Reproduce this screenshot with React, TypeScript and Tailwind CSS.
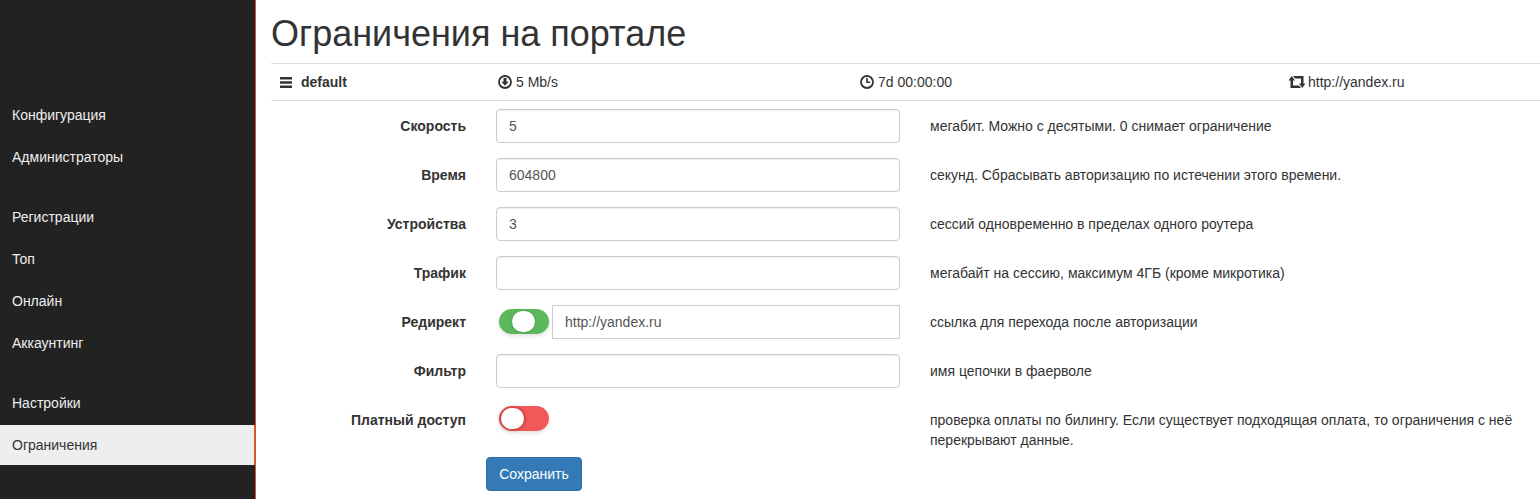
function Toggle({ on }: { on: boolean }) {
  return (
    <div
      className={`relative h-[25px] w-[50px] shrink-0 rounded-full shadow-[0_2px_4px_rgba(0,0,0,0.12)] ${
        on ? "bg-[#5cb85c]" : "bg-[#f25858]"
      }`}
    >
      <div
        className={`absolute top-[2px] h-[21px] w-[23px] rounded-full bg-white ${
          on
            ? "left-[13px] shadow-[0_0_2px_1px_rgba(0,0,0,0.1)]"
            : "left-[2px] shadow-[0_0_2px_2px_rgba(120,20,20,0.25)]"
        }`}
      />
    </div>
  );
}

function Row({
  label,
  help,
  children,
  tall,
}: {
  label: string;
  help: React.ReactNode;
  children: React.ReactNode;
  tall?: boolean;
}) {
  return (
    <div className={`flex ${tall ? "h-[54px]" : "h-[49px]"}`}>
      <label className="w-[195px] shrink-0 pt-[7px] text-right font-bold leading-5">
        {label}
      </label>
      <div className="ml-[30px] w-[404px] shrink-0">{children}</div>
      <div className="ml-[30px] w-[595px] shrink-0 pt-[7px] leading-5">{help}</div>
    </div>
  );
}

function Field({ value }: { value?: string }) {
  return (
    <input
      readOnly
      value={value ?? ""}
      className="h-[34px] w-full rounded border border-[#ccc] bg-white px-3 text-sm text-[#555] shadow-[inset_0_1px_1px_rgba(0,0,0,0.075)] outline-none"
    />
  );
}

const menu = [
  ["Конфигурация", "Администраторы"],
  ["Регистрации", "Топ", "Онлайн", "Аккаунтинг"],
  ["Настройки", "Ограничения"],
];

export default function App() {
  return (
    <div className="flex h-[499px] overflow-hidden bg-white font-['Liberation_Sans',Arial,sans-serif] text-sm text-[#333]">
      <aside className="w-[256px] shrink-0 border-r border-[#d9582b] bg-[#222] pt-[95px]">
        {menu.map((group, i) => (
          <div key={i} className="mb-5 flex flex-col gap-[2px]">
            {group.map((item) => (
              <a
                key={item}
                className={`flex h-10 items-center px-3 ${
                  item === "Ограничения"
                    ? "border-r border-[#d9582b] bg-[#eee] text-[#333]"
                    : "text-[#eee]"
                }`}
              >
                {item}
              </a>
            ))}
          </div>
        ))}
      </aside>

      <main className="min-w-0 flex-1 pl-[15px]">
        <h1 className="h-[63px] pt-[14px] text-[36px] leading-10 font-normal">
          Ограничения на портале
        </h1>

        <div className="grid h-[38px] grid-cols-[218px_362px_429px_260px] items-center border-y border-[#ddd]">
          <div className="flex items-center pl-[9px]">
            <svg width="12" height="11" viewBox="0 0 12 11">
              <path d="M0 0h12v2.600H0zM0 4.200h12v2.600H0zM0 8.400h12V11H0z" fill="#333" />
            </svg>
            <b className="ml-[9px]">default</b>
          </div>
          <div className="flex items-center pl-[9px]">
            <svg width="14" height="14" viewBox="0 0 14 14">
              <circle cx="7" cy="7" r="6" fill="none" stroke="#333" strokeWidth="1.8" />
              <path d="M5.500 3h3v3.700h2.200L7 10.800 3.300 6.700h2.200z" fill="#333" />
            </svg>
            <span className="ml-1">5 Mb/s</span>
          </div>
          <div className="flex items-center pl-[9px]">
            <svg width="14" height="14" viewBox="0 0 14 14">
              <circle cx="7" cy="7" r="6" fill="none" stroke="#333" strokeWidth="1.8" />
              <path d="M7 3v4.300h3.200" fill="none" stroke="#333" strokeWidth="1.6" />
            </svg>
            <span className="ml-1">7d 00:00:00</span>
          </div>
          <div className="flex items-center pl-2">
            <svg width="18" height="12" viewBox="0 0 18 12">
              <path
                d="M3.750 0 7 4.500H5v5h6l2 2.500H2.500V4.500h-2zM14.250 12 11 7.500h2v-5H7L5 0h10.500v7.500h2z"
                fill="#333"
              />
            </svg>
            <span className="ml-[2px]">http://yandex.ru</span>
          </div>
        </div>

        <form className="pt-2">
          <Row label="Скорость" help="мегабит. Можно с десятыми. 0 снимает ограничение">
            <Field value="5" />
          </Row>
          <Row label="Время" help="секунд. Сбрасывать авторизацию по истечении этого времени.">
            <Field value="604800" />
          </Row>
          <Row label="Устройства" help="сессий одновременно в пределах одного роутера">
            <Field value="3" />
          </Row>
          <Row label="Трафик" help="мегабайт на сессию, максимум 4ГБ (кроме микротика)">
            <Field />
          </Row>
          <Row label="Редирект" help="ссылка для перехода после авторизации">
            <div className="flex h-[34px] items-start">
              <div className="mt-1 ml-[3px]">
                <Toggle on />
              </div>
              <input
                readOnly
                value="http://yandex.ru"
                className="ml-[3px] h-[34px] min-w-0 flex-1 border border-[#ccc] bg-white px-3 text-sm text-[#555] outline-none"
              />
            </div>
          </Row>
          <Row label="Фильтр" help="имя цепочки в фаерволе">
            <Field />
          </Row>
          <Row
            tall
            label="Платный доступ"
            help="проверка оплаты по билингу. Если существует подходящая оплата, то ограничения с неё перекрывают данные."
          >
            <div className="mt-[3px] ml-[3px]">
              <Toggle on={false} />
            </div>
          </Row>
          <div className="pl-[215px]">
            <button
              type="button"
              className="h-[34px] w-24 rounded border border-[#2e6da4] bg-[#337ab7] text-sm text-white"
            >
              Сохранить
            </button>
          </div>
        </form>
      </main>
    </div>
  );
}
